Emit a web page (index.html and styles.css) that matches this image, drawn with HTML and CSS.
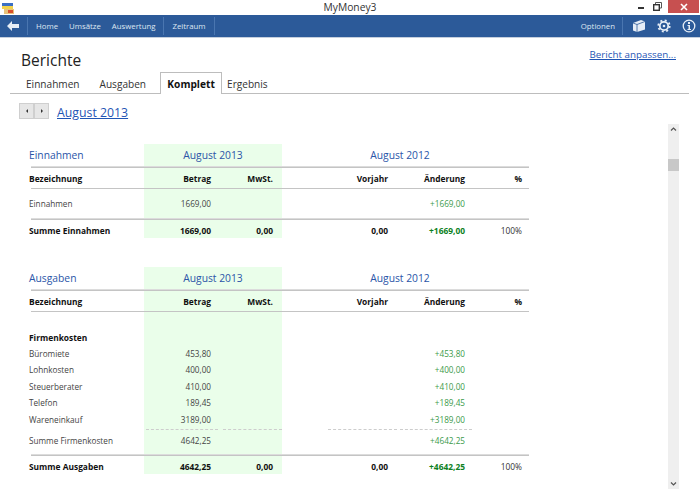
FILE: index.html
```html
<!DOCTYPE html>
<html>
<head>
	<title>MyMoney3</title>
	<link rel="stylesheet" href="styles.css">
</head>
<body>
	<div class="titlebar">
		<svg class="app_icon" width="14" height="14" viewBox="0 0 14 14">
			<rect x="0" y="1" width="11" height="3" fill="#3b6fc4"/>
			<rect x="0" y="4" width="11" height="3" fill="#f2d24b"/>
			<rect x="2" y="7" width="10" height="5" fill="#e8c27a"/>
			<rect x="6" y="8" width="5" height="3" fill="#d8502c"/>
		</svg>
		<div class="app_title">MyMoney3</div>
		<div class="win_buttons">
			<span class="win_min"></span>
			<svg class="win_restore" width="9" height="9" viewBox="0 0 9 9">
				<path d="M2.500 2V.5h6v5.500H7" fill="none" stroke="#555"/>
				<rect x=".7" y="2.700" width="5.600" height="5.600" fill="none" stroke="#333" stroke-width="1.400"/>
			</svg>
			<div class="win_close">
				<svg width="8" height="8" viewBox="0 0 8 8"><path d="M1 1l6 6M7 1l-6 6" stroke="#fff" stroke-width="1.600"/></svg>
			</div>
		</div>
	</div>

	<div class="toolbar">
		<svg class="back_icon" width="12" height="10" viewBox="0 0 12 10"><path d="M0 5l5-5v3h7v4H5v3z" fill="#e6edf6"/></svg>
		<span class="sep sep_back"></span>
		<a class="tool">Home</a>
		<a class="tool">Umsätze</a>
		<a class="tool">Auswertung</a>
		<span class="sep sep_mid"></span>
		<a class="tool">Zeitraum</a>
		<span class="sep sep_mid"></span>
		<span class="spacer"></span>
		<a class="tool">Optionen</a>
		<span class="sep sep_opt"></span>
		<svg class="tool_icon box_icon" width="14" height="14" viewBox="0 0 14 14">
			<path d="M1 4l8-3 4 1.500v8L5 13 1 11.500z" fill="#e6edf6"/>
			<path d="M5 5.500V13M5 5.500l8-3M1 4l4 1.500" stroke="#2c5a99" stroke-width=".8" fill="none"/>
		</svg>
		<svg class="tool_icon gear_icon" width="14" height="14" viewBox="0 0 14 14">
			<circle cx="7" cy="7" r="4.200" fill="none" stroke="#e6edf6" stroke-width="1.800"/>
			<circle cx="7" cy="7" r="5.700" fill="none" stroke="#e6edf6" stroke-width="1.800" stroke-dasharray="2 2.480"/>
			<circle cx="7" cy="7" r="1.300" fill="#e6edf6"/>
		</svg>
		<svg class="tool_icon info_icon" width="14" height="14" viewBox="0 0 14 14">
			<circle cx="7" cy="7" r="5.800" fill="none" stroke="#e6edf6" stroke-width="1.300"/>
			<rect x="6" y="3" width="2" height="2" fill="#e6edf6"/>
			<path d="M5.500 6H8v4h1v1H5.500v-1h1V7h-1z" fill="#e6edf6"/>
		</svg>
	</div>

	<div class="page_head">
		<h1>Berichte</h1>
		<a class="link customize">Bericht anpassen...</a>
	</div>

	<div class="tabs">
		<span class="tab tab_einnahmen">Einnahmen</span>
		<span class="tab tab_ausgaben">Ausgaben</span>
		<span class="tab active">Komplett</span>
		<span class="tab tab_ergebnis">Ergebnis</span>
	</div>

	<div class="period">
		<div class="pager">
			<span class="pager_btn"><i class="arrow_left"></i></span>
			<span class="pager_btn"><i class="arrow_right"></i></span>
		</div>
		<a class="link period_link">August 2013</a>
	</div>

	<div class="main">
		<div class="report">
			<section class="block">
				<div class="row head_row">
					<div class="c_name group">Einnahmen</div>
					<div class="c_period group">August 2013</div>
					<div class="c_period2 group">August 2012</div>
				</div>
				<div class="rule"></div>
				<div class="row col_row strong">
					<div class="c_name">Bezeichnung</div><div class="c_betrag">Betrag</div><div class="c_mwst">MwSt.</div><div class="c_vorjahr">Vorjahr</div><div class="c_diff">Änderung</div><div class="c_pct">%</div>
				</div>
				<div class="rule thin"></div>
				<div class="row item first_item">
					<div class="c_name">Einnahmen</div><div class="c_betrag">1669,00</div><div class="c_mwst"></div><div class="c_vorjahr"></div><div class="c_diff plus">+1669,00</div><div class="c_pct"></div>
				</div>
				<div class="rule"></div>
				<div class="row total strong">
					<div class="c_name">Summe Einnahmen</div><div class="c_betrag">1669,00</div><div class="c_mwst">0,00</div><div class="c_vorjahr">0,00</div><div class="c_diff plus">+1669,00</div><div class="c_pct pct_sum">100%</div>
				</div>
			</section>

			<section class="block">
				<div class="row head_row">
					<div class="c_name group">Ausgaben</div>
					<div class="c_period group">August 2013</div>
					<div class="c_period2 group">August 2012</div>
				</div>
				<div class="rule"></div>
				<div class="row col_row strong">
					<div class="c_name">Bezeichnung</div><div class="c_betrag">Betrag</div><div class="c_mwst">MwSt.</div><div class="c_vorjahr">Vorjahr</div><div class="c_diff">Änderung</div><div class="c_pct">%</div>
				</div>
				<div class="rule thin"></div>
				<div class="row subhead strong"><div class="c_name">Firmenkosten</div></div>
				<div class="row item">
					<div class="c_name">Büromiete</div><div class="c_betrag">453,80</div><div class="c_mwst"></div><div class="c_vorjahr"></div><div class="c_diff plus">+453,80</div>
				</div>
				<div class="row item">
					<div class="c_name">Lohnkosten</div><div class="c_betrag">400,00</div><div class="c_mwst"></div><div class="c_vorjahr"></div><div class="c_diff plus">+400,00</div>
				</div>
				<div class="row item">
					<div class="c_name">Steuerberater</div><div class="c_betrag">410,00</div><div class="c_mwst"></div><div class="c_vorjahr"></div><div class="c_diff plus">+410,00</div>
				</div>
				<div class="row item">
					<div class="c_name">Telefon</div><div class="c_betrag">189,45</div><div class="c_mwst"></div><div class="c_vorjahr"></div><div class="c_diff plus">+189,45</div>
				</div>
				<div class="row item">
					<div class="c_name">Wareneinkauf</div><div class="c_betrag">3189,00</div><div class="c_mwst"></div><div class="c_vorjahr"></div><div class="c_diff plus">+3189,00</div>
				</div>
				<div class="dots">
					<span class="dot_a"></span><span class="dot_b"></span><span class="dot_c"></span><span class="dot_d"></span>
				</div>
				<div class="row item sub_sum">
					<div class="c_name">Summe Firmenkosten</div><div class="c_betrag">4642,25</div><div class="c_mwst"></div><div class="c_vorjahr"></div><div class="c_diff plus">+4642,25</div>
				</div>
				<div class="rule"></div>
				<div class="row total strong">
					<div class="c_name">Summe Ausgaben</div><div class="c_betrag">4642,25</div><div class="c_mwst">0,00</div><div class="c_vorjahr">0,00</div><div class="c_diff plus">+4642,25</div><div class="c_pct pct_sum">100%</div>
				</div>
			</section>
		</div>

		<div class="scrollbar">
			<svg width="11" height="11" viewBox="0 0 11 11"><path d="M3 6.500l2.500-2.500L8 6.500" fill="none" stroke="#555" stroke-width="1.200"/></svg>
			<div class="track"><div class="thumb"></div></div>
			<svg width="11" height="11" viewBox="0 0 11 11"><path d="M3 4.500L5.500 7 8 4.500" fill="none" stroke="#555" stroke-width="1.200"/></svg>
		</div>
	</div>
</body>
</html>
```

FILE: styles.css
```css
html, body{
	margin: 0;
	padding: 0;
}
body{
	width: 700px;
	height: 498px;
	overflow: hidden;
	background-color: #fff;
	font-family: "Open Sans", "Noto Sans", sans-serif;
	color: #1a1a1a;
}
a{
	cursor: pointer;
}

/* window title */
.titlebar{
	display: grid;
	grid-template-columns: 1fr auto 1fr;
	align-items: start;
	height: 15px;
	background-color: #fff;
}
.app_icon{
	margin: 2px 0 0 2px;
}
.app_title{
	font-size: 10.300px;
	line-height: 15px;
	color: #333;
}
.win_buttons{
	display: flex;
	justify-content: flex-end;
	align-items: flex-start;
	padding-right: 1px;
}
.win_min{
	width: 6px;
	height: 2px;
	margin: 7px 9px 0 0;
	background-color: #333;
}
.win_restore{
	margin: 2px 0 0 0;
}
.win_close{
	display: flex;
	align-items: center;
	justify-content: center;
	width: 31px;
	height: 13px;
	margin-left: 6px;
	background-color: #c75050;
}

/* blue toolbar */
.toolbar{
	display: flex;
	align-items: center;
	height: 22px;
	background-color: #2c5a99;
	border-bottom: #c5cfdd 1px solid;
	color: #dfe7f2;
	font-size: 7.800px;
}
.back_icon{
	margin-left: 7px;
}
.sep{
	width: 1px;
	height: 18px;
	background-color: #4a76b0;
}
.sep_back{
	margin: 0 8px 0 8px;
}
.sep_mid{
	margin: 0 8px;
}
.sep_opt{
	margin: 0 9px 0 7px;
}
.tool{
	margin-right: 11px;
}
.tool:nth-of-type(3), .tool:nth-of-type(4), .tool:nth-of-type(5){
	margin-right: 0;
}
.spacer{
	flex: 1;
}
.tool_icon{
	margin-right: 11px;
}
.info_icon{
	margin-right: 4px;
}

/* heading */
.page_head{
	display: flex;
	justify-content: space-between;
	height: 34px;
	padding: 0 24px 0 21px;
}
h1{
	margin: 10px 0 0 0;
	font-size: 15.500px;
	line-height: 24px;
	font-weight: 400;
	color: #222;
}
.link{
	color: #1f55b5;
	text-decoration: underline;
}
.customize{
	margin-top: 9px;
	font-size: 9.800px;
	line-height: 16px;
}

/* tabs */
.tabs{
	display: flex;
	align-items: flex-end;
	height: 21px;
	margin: 0 11px 0 10px;
	border-bottom: #bdbdbd 1px solid;
	font-size: 10.100px;
	color: #333;
}
.tab{
	height: 18px;
	line-height: 18px;
}
.tab_einnahmen{
	margin-left: 16px;
}
.tab_ausgaben{
	margin-left: 20px;
	margin-right: 14px;
}
.tab.active{
	box-sizing: border-box;
	width: 62px;
	height: 22px;
	line-height: 23px;
	margin-bottom: -1px;
	background-color: #fff;
	border: #bdbdbd 1px solid;
	border-bottom: 0;
	text-align: center;
	font-size: 10.200px;
	font-weight: 700;
	color: #111;
}
.tab_ergebnis{
	margin-left: 5px;
}

/* month switch */
.period{
	display: flex;
	align-items: flex-start;
	box-sizing: border-box;
	height: 30px;
	padding: 9px 0 0 19px;
}
.pager{
	display: flex;
}
.pager_btn{
	display: flex;
	align-items: center;
	justify-content: center;
	box-sizing: border-box;
	width: 15px;
	height: 16px;
	background-color: #e6e6e6;
	border: #cfcfcf 1px solid;
}
.arrow_left, .arrow_right{
	width: 0;
	height: 0;
	border-top: 2.500px solid transparent;
	border-bottom: 2.500px solid transparent;
}
.arrow_left{
	border-right: 2.500px solid #333;
}
.arrow_right{
	border-left: 2.500px solid #333;
}
.period_link{
	margin-left: 8px;
	font-size: 12.300px;
	line-height: 20px;
}

/* report */
.main{
	display: flex;
	justify-content: space-between;
	height: 365px;
	padding-right: 21px;
}
.report{
	width: 500px;
	padding: 20px 0 0 29px;
}
.block{
	margin-bottom: 29px;
	background: linear-gradient(#eafeea, #eafeea) 115px 0 / 138px 100% no-repeat;
	font-size: 8.200px;
}
.row{
	display: flex;
	align-items: center;
}
.c_name{
	width: 115px;
}
.c_betrag{
	width: 67px;
	text-align: right;
}
.c_mwst{
	width: 62px;
	text-align: right;
}
.c_vorjahr{
	width: 115px;
	text-align: right;
}
.c_diff{
	width: 77px;
	text-align: right;
}
.c_pct{
	width: 57px;
	text-align: right;
}
.strong{
	font-size: 8.400px;
	font-weight: 700;
	color: #111;
}
.head_row{
	height: 22px;
	font-size: 10.300px;
	color: #2a55a8;
}
.c_period{
	width: 138px;
	text-align: center;
}
.c_period2{
	box-sizing: border-box;
	width: 247px;
	padding-right: 11px;
	text-align: center;
}
.rule{
	height: 1px;
	margin-left: 2px;
	background-color: #c4c4c4;
	border-top: #dcdcdc 1px solid;
}
.rule.thin{
	border-top: 0;
}
.col_row{
	height: 20px;
}
.item{
	height: 16.500px;
	color: #444;
}
.first_item{
	height: 29px;
}
.plus{
	color: #3b9a4a;
}
.total{
	height: 16px;
	padding-top: 2px;
}
.total .plus{
	color: #0c7f22;
}
.pct_sum{
	font-weight: 400;
	color: #333;
}
.subhead{
	height: 16px;
	margin-top: 17px;
}
.dots{
	display: flex;
	height: 3px;
	margin-top: 1.500px;
}
.dots span{
	height: 0;
	border-top: #cdcdcd 1px dashed;
}
.dot_a{
	width: 72px;
	margin-left: 117px;
}
.dot_b{
	width: 59px;
	margin-left: 5px;
}
.dot_c{
	width: 69px;
	margin-left: 46px;
}
.dot_d{
	width: 72px;
	margin-left: 3px;
}
.sub_sum{
	height: 16px;
	margin-bottom: 6px;
}

/* scroll bar */
.scrollbar{
	display: flex;
	flex-direction: column;
	width: 11px;
	height: 365px;
	background-color: #efefef;
}
.track{
	flex: 1;
	padding-top: 24px;
}
.thumb{
	height: 12px;
	background-color: #c8c8c8;
}
```
